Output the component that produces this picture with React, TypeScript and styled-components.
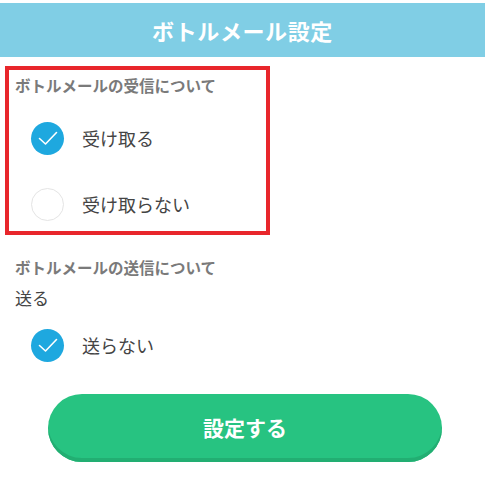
import React, { useState } from 'react';
import styled, { createGlobalStyle } from 'styled-components';

const GlobalStyle = createGlobalStyle`
  body {
    margin: 0;
    background: #ffffff;
    font-family: "Noto Sans CJK JP", "Noto Sans", sans-serif;
  }
`;

const Page = styled.div`
  width: 485px;
  padding-top: 3px;
`;

const Header = styled.header`
  height: 54px;
  background-color: #80cee5;
  display: flex;
  align-items: center;
  justify-content: center;
  color: #ffffff;
  font-size: 22px;
  font-weight: 700;
  letter-spacing: 0.6px;
`;

const Highlight = styled.section`
  margin: 9px 0 0 5px;
  width: 257px;
  border: 4px solid #e8262b;
  padding-bottom: 7px;
`;

const SectionLabel = styled.div<{ $indent: number; $line?: number }>`
  padding-left: ${({ $indent }) => $indent}px;
  font-size: 15.5px;
  font-weight: 700;
  color: #7a7a7a;
  line-height: ${({ $line }) => $line ?? 30}px;
`;

const OptionList = styled.div<{ $indent: number }>`
  display: flex;
  flex-direction: column;
  gap: 26px;
  margin-top: 18px;
  padding-left: ${({ $indent }) => $indent}px;
`;

const OptionRow = styled.label`
  display: flex;
  align-items: center;
  gap: 18px;
  height: 40px;
  cursor: pointer;
  font-size: 18px;
  color: #444444;
`;

const Circle = styled.span<{ $checked: boolean }>`
  box-sizing: border-box;
  width: 33px;
  height: 33px;
  border-radius: 50%;
  display: flex;
  align-items: center;
  justify-content: center;
  background-color: ${({ $checked }) => ($checked ? '#1ea8df' : '#ffffff')};
  border: ${({ $checked }) => ($checked ? 'none' : '1.5px solid #e4e4e4')};
`;

const SendBlock = styled.section`
  margin-top: 20px;
`;

const SubValue = styled.div`
  margin-top: 7px;
  padding-left: 15px;
  font-size: 17px;
  color: #444444;
  line-height: 24px;
`;

const SubList = styled(OptionList)`
  margin-top: 15px;
`;

const SubmitButton = styled.button`
  margin: 29px 0 0 48px;
  width: 394px;
  height: 68px;
  border: none;
  border-radius: 34px;
  background-color: #27c381;
  box-shadow: inset 0 -4px 0 #22ae72;
  color: #ffffff;
  font-family: inherit;
  font-size: 21px;
  font-weight: 700;
  padding-bottom: 3px;
  cursor: pointer;
`;

const Check = () => (
  <svg width="22" height="22" viewBox="0 0 22 22" fill="none">
    <path d="M2.5 11.5 L8.5 17 L19.5 5.5" stroke="#ffffff" strokeWidth="1.6" strokeLinecap="round" strokeLinejoin="round" />
  </svg>
);

const Option: React.FC<{ label: string; checked: boolean; onClick: () => void }> = ({ label, checked, onClick }) => (
  <OptionRow onClick={onClick}>
    <Circle $checked={checked}>{checked && <Check />}</Circle>
    {label}
  </OptionRow>
);

const App: React.FC = () => {
  const [receive, setReceive] = useState(true);
  const [noSend, setNoSend] = useState(true);

  return (
    <Page>
      <GlobalStyle />
      <Header>ボトルメール設定</Header>

      <Highlight>
        <SectionLabel $indent={6}>ボトルメールの受信について</SectionLabel>
        <OptionList $indent={22}>
          <Option label="受け取る" checked={receive} onClick={() => setReceive(true)} />
          <Option label="受け取らない" checked={!receive} onClick={() => setReceive(false)} />
        </OptionList>
      </Highlight>

      <SendBlock>
        <SectionLabel $indent={15} $line={24}>ボトルメールの送信について</SectionLabel>
        <SubValue>送る</SubValue>
        <SubList $indent={31}>
          <Option label="送らない" checked={noSend} onClick={() => setNoSend(!noSend)} />
        </SubList>
      </SendBlock>

      <SubmitButton>設定する</SubmitButton>
    </Page>
  );
};

export default App;
